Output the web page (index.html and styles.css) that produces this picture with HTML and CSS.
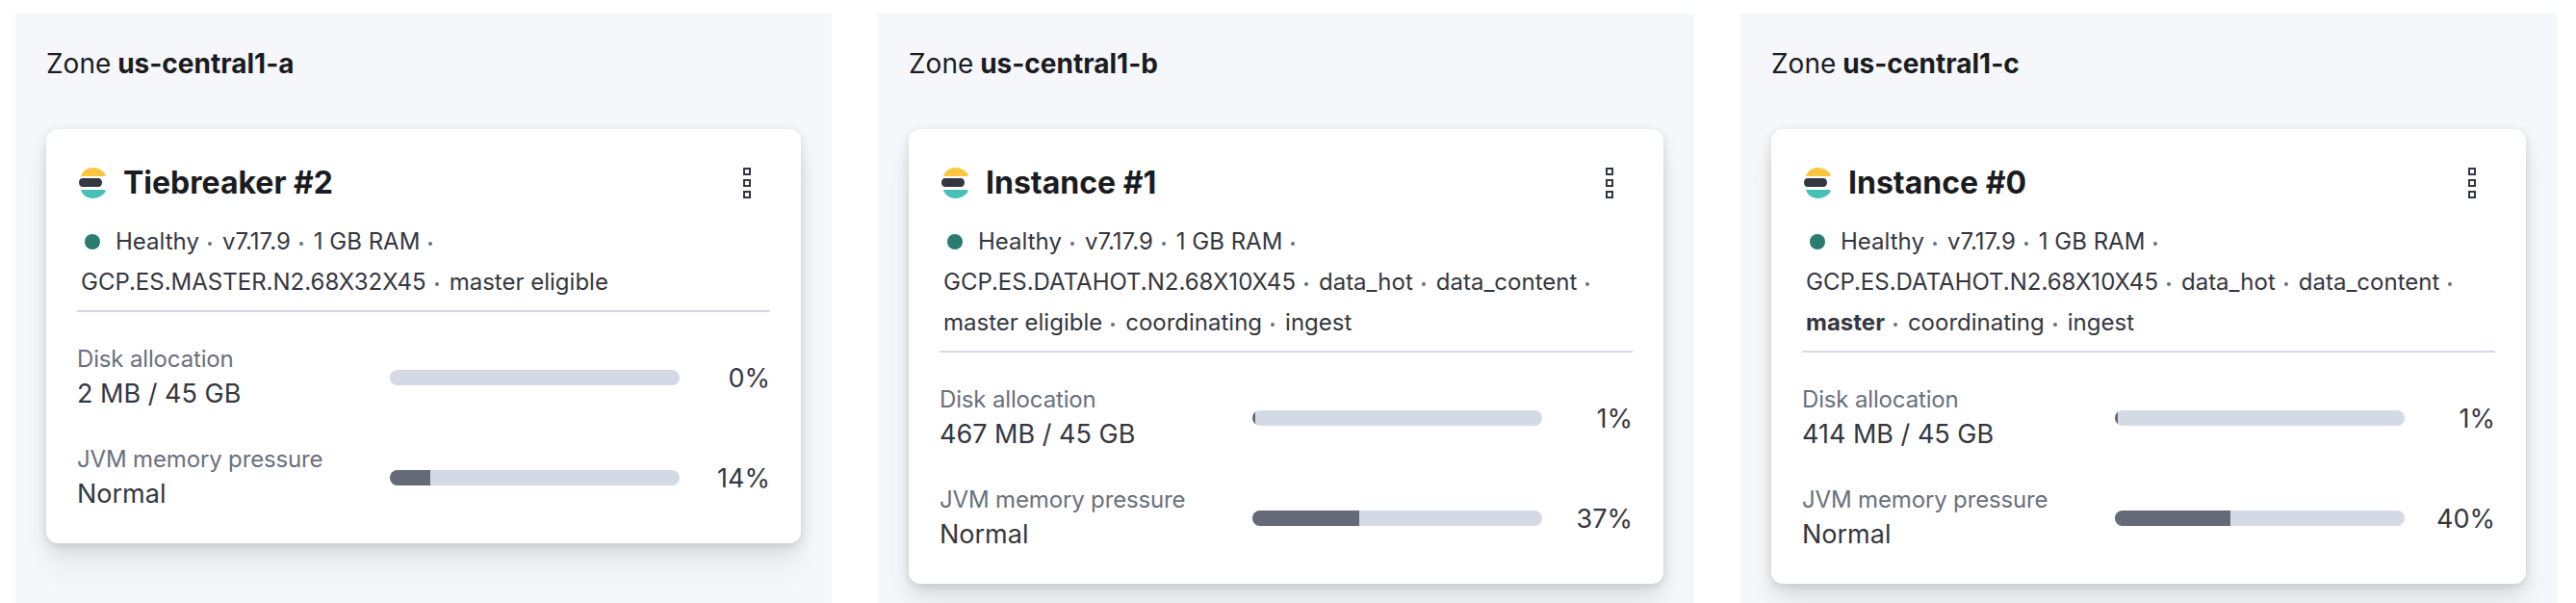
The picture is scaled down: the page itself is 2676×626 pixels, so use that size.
FILE: index.html
```html
<!DOCTYPE html>
<html lang="en">
<head>
  <meta charset="UTF-8" />
  <title>Instances</title>
  <link rel="stylesheet" href="styles.css">
</head>
<body>
  <main class="zones">

    <section class="zone">
      <h2 class="zone-title">Zone <strong>us-central1-a</strong></h2>
      <article class="card">
        <header class="card-head">
          <svg class="logo" viewBox="0 0 28 32"><path fill="#fcc53f" d="M2 9C3.500 3.500 8.500 0 14 0c6 0 11 3 13.500 7 .5 1 0 2-1.500 2z"/><path fill="#343741" d="M4 11h16c2.500 0 4 2 4 4.500S22.500 20 20 20H4c-2.500 0-4-2-4-4.500S1.500 11 4 11z"/><path fill="#49c0b6" d="M2 23c1.500 5.500 6.500 9 12 9 6 0 11-3 13.500-7 .5-1 0-2-1.500-2z"/></svg>
          <h3 class="card-title">Tiebreaker #2</h3>
          <div class="menu"><i></i><i></i><i></i></div>
        </header>
        <ul class="meta">
          <li class="healthy"><span class="dot"></span>Healthy</li>
          <li>v7.17.9</li>
          <li>1 GB RAM</li>
          <li>GCP.ES.MASTER.N2.68X32X45</li>
          <li class="last">master eligible</li>
        </ul>
        <div class="stat">
          <div class="stat-text"><div class="stat-label">Disk allocation</div><div class="stat-value">2 MB / 45 GB</div></div>
          <div class="bar"></div>
          <div class="pct">0%</div>
        </div>
        <div class="stat">
          <div class="stat-text"><div class="stat-label">JVM memory pressure</div><div class="stat-value">Normal</div></div>
          <div class="bar"><div class="fill" style="width: 14%"></div></div>
          <div class="pct">14%</div>
        </div>
      </article>
    </section>

    <section class="zone">
      <h2 class="zone-title">Zone <strong>us-central1-b</strong></h2>
      <article class="card">
        <header class="card-head">
          <svg class="logo" viewBox="0 0 28 32"><path fill="#fcc53f" d="M2 9C3.500 3.500 8.500 0 14 0c6 0 11 3 13.500 7 .5 1 0 2-1.500 2z"/><path fill="#343741" d="M4 11h16c2.500 0 4 2 4 4.500S22.500 20 20 20H4c-2.500 0-4-2-4-4.500S1.500 11 4 11z"/><path fill="#49c0b6" d="M2 23c1.500 5.500 6.500 9 12 9 6 0 11-3 13.500-7 .5-1 0-2-1.500-2z"/></svg>
          <h3 class="card-title">Instance #1</h3>
          <div class="menu"><i></i><i></i><i></i></div>
        </header>
        <ul class="meta">
          <li class="healthy"><span class="dot"></span>Healthy</li>
          <li>v7.17.9</li>
          <li>1 GB RAM</li>
          <li>GCP.ES.DATAHOT.N2.68X10X45</li>
          <li>data_hot</li>
          <li>data_content</li>
          <li>master eligible</li>
          <li>coordinating</li>
          <li class="last">ingest</li>
        </ul>
        <div class="stat">
          <div class="stat-text"><div class="stat-label">Disk allocation</div><div class="stat-value">467 MB / 45 GB</div></div>
          <div class="bar"><div class="fill" style="width: 1%"></div></div>
          <div class="pct">1%</div>
        </div>
        <div class="stat">
          <div class="stat-text"><div class="stat-label">JVM memory pressure</div><div class="stat-value">Normal</div></div>
          <div class="bar"><div class="fill" style="width: 37%"></div></div>
          <div class="pct">37%</div>
        </div>
      </article>
    </section>

    <section class="zone">
      <h2 class="zone-title">Zone <strong>us-central1-c</strong></h2>
      <article class="card">
        <header class="card-head">
          <svg class="logo" viewBox="0 0 28 32"><path fill="#fcc53f" d="M2 9C3.500 3.500 8.500 0 14 0c6 0 11 3 13.500 7 .5 1 0 2-1.500 2z"/><path fill="#343741" d="M4 11h16c2.500 0 4 2 4 4.500S22.500 20 20 20H4c-2.500 0-4-2-4-4.500S1.500 11 4 11z"/><path fill="#49c0b6" d="M2 23c1.500 5.500 6.500 9 12 9 6 0 11-3 13.500-7 .5-1 0-2-1.500-2z"/></svg>
          <h3 class="card-title">Instance #0</h3>
          <div class="menu"><i></i><i></i><i></i></div>
        </header>
        <ul class="meta">
          <li class="healthy"><span class="dot"></span>Healthy</li>
          <li>v7.17.9</li>
          <li>1 GB RAM</li>
          <li>GCP.ES.DATAHOT.N2.68X10X45</li>
          <li>data_hot</li>
          <li>data_content</li>
          <li><strong>master</strong></li>
          <li>coordinating</li>
          <li class="last">ingest</li>
        </ul>
        <div class="stat">
          <div class="stat-text"><div class="stat-label">Disk allocation</div><div class="stat-value">414 MB / 45 GB</div></div>
          <div class="bar"><div class="fill" style="width: 1%"></div></div>
          <div class="pct">1%</div>
        </div>
        <div class="stat">
          <div class="stat-text"><div class="stat-label">JVM memory pressure</div><div class="stat-value">Normal</div></div>
          <div class="bar"><div class="fill" style="width: 40%"></div></div>
          <div class="pct">40%</div>
        </div>
      </article>
    </section>

  </main>
</body>
</html>
```

FILE: styles.css
```css
html, body {
  height: 100%;
}
body {
  margin: 0;
  font-family: Inter, "Liberation Sans", sans-serif;
  color: #343741;
  background: #fff;
  overflow: hidden;
}
.zones {
  display: flex;
  gap: 48px;
  height: 100%;
  box-sizing: border-box;
  padding: 14px 20px 0 16px;
}
.zone {
  flex: 1;
  padding: 32px;
  background: #f5f7fa;
}
.zone-title {
  margin: 0 0 48px;
  font-size: 28px;
  line-height: 40px;
  font-weight: 400;
  word-spacing: -1px;
  color: #1a1c21;
}
.zone-title strong {
  font-weight: 700;
}
.card {
  padding: 36px 32px 32px;
  background: #fff;
  border-radius: 12px;
  box-shadow: 0 2px 8px rgba(0, 0, 0, 0.08), 0 5px 16px rgba(0, 0, 0, 0.06), 0 12px 24px rgba(0, 0, 0, 0.05), 0 30px 30px rgba(0, 0, 0, 0.04);
}
.card-head {
  display: flex;
  align-items: center;
  gap: 18px;
  margin-left: 2px;
}
.logo {
  width: 28px;
  height: 32px;
  flex: none;
}
.card-title {
  flex: 1;
  margin: 0;
  font-size: 32px;
  line-height: 40px;
  font-weight: 700;
  color: #1a1c21;
}
.menu {
  display: flex;
  flex-direction: column;
  gap: 4px;
  margin-right: 20px;
}
.menu i {
  display: block;
  box-sizing: border-box;
  width: 8px;
  height: 8px;
  border: 2px solid #343741;
}
.meta {
  display: flex;
  flex-wrap: wrap;
  margin: 20px 0 0;
  padding: 0 0 8px;
  list-style: none;
  font-size: 24px;
  line-height: 42px;
  border-bottom: 2px solid #d3dae6;
}
.meta li {
  display: flex;
  align-items: center;
  padding-left: 4px;
  white-space: nowrap;
}
.meta li::after {
  content: "";
  width: 4px;
  height: 4px;
  margin: 4px 7px 0 9px;
  border-radius: 50%;
  background: #69707d;
}
.meta li.last::after {
  display: none;
}
.healthy {
  margin-left: 4px;
}
.dot {
  width: 16px;
  height: 16px;
  margin-right: 16px;
  border-radius: 50%;
  background: #2a7b70;
}
.stat {
  display: flex;
  align-items: center;
  height: 72px;
  margin-top: 32px;
}
.stat-text {
  width: 325px;
  padding-bottom: 3px;
}
.stat-label {
  font-size: 24px;
  line-height: 36px;
  letter-spacing: -0.15px;
  color: #69707d;
}
.stat-value {
  font-size: 27px;
  line-height: 36px;
}
.bar {
  width: 301px;
  height: 16px;
  overflow: hidden;
  border-radius: 8px;
  background: #d3dae6;
}
.fill {
  height: 100%;
  background: #646a77;
}
.pct {
  flex: 1;
  text-align: right;
  font-size: 27px;
}
```
